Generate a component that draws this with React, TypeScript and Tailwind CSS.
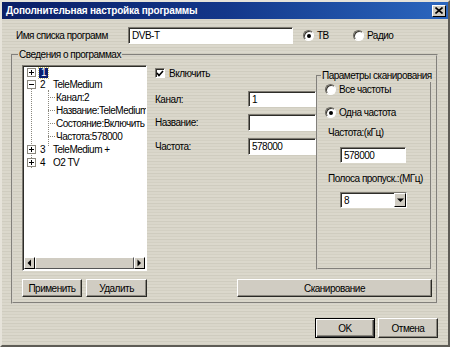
import React from "react";

const font = { fontFamily: '"Liberation Sans", Arial, sans-serif' };

const texture =
  "bg-fixed bg-[repeating-linear-gradient(0deg,#dbd8cc_0px,#dbd8cc_2px,#d3d0c3_2px,#d3d0c3_3px,#d9d6ca_3px,#d9d6ca_5px,#cfccbf_5px,#cfccbf_6px)]";

function Radio({ checked }: { checked?: boolean }) {
  return (
    <span className="relative inline-flex h-[11px] w-[11px] shrink-0 items-center justify-center rounded-full border border-t-[#6b6860] border-l-[#6b6860] border-b-[#ffffff] border-r-[#ffffff] bg-white shadow-[inset_1px_1px_0_#3a3832]">
      {checked && <span className="h-[4px] w-[4px] rounded-full bg-black" />}
    </span>
  );
}

function Btn({ children, className = "", def = false }: { children: React.ReactNode; className?: string; def?: boolean }) {
  return (
    <div
      className={
        "flex shrink-0 items-center justify-center bg-[#d0ccc2] text-black " +
        (def
          ? "border border-black shadow-[inset_1px_1px_0_#fff,inset_-1px_-1px_0_#404040,inset_-2px_-2px_0_#8a877e] "
          : "border border-t-[#ffffff] border-l-[#ffffff] border-r-[#2a2925] border-b-[#2a2925] shadow-[inset_-1px_-1px_0_#8a877e] ") +
        className
      }
    >
      {children}
    </div>
  );
}

function Input({ value, className = "" }: { value?: string; className?: string }) {
  return (
    <div
      className={
        "flex shrink-0 items-center bg-white pl-[3px] text-black border border-t-[#7d7a72] border-l-[#7d7a72] border-b-[#ffffff] border-r-[#ffffff] shadow-[inset_1px_1px_0_#2e2d29] " +
        className
      }
    >
      {value}
    </div>
  );
}

function PlusBox({ minus }: { minus?: boolean }) {
  return (
    <span className="relative flex h-[9px] w-[9px] shrink-0 items-center justify-center border border-[#8a877e] bg-white">
      <span className="absolute h-[1px] w-[5px] bg-black" />
      {!minus && <span className="absolute h-[5px] w-[1px] bg-black" />}
    </span>
  );
}

function Arrow({ dir }: { dir: "left" | "right" | "down" }) {
  const pts = dir === "left" ? "4,0.5 0.5,4 4,7.5" : dir === "right" ? "0.5,0.5 4,4 0.5,7.5" : "0,0.5 7,0.5 3.5,4";
  const w = dir === "down" ? 7 : 5;
  const h = dir === "down" ? 5 : 8;
  return (
    <svg width={w} height={h} viewBox={`0 0 ${w} ${h}`}>
      <polygon points={pts} fill="#000" />
    </svg>
  );
}

function Legend({ children, className = "" }: { children: React.ReactNode; className?: string }) {
  return (
    <span className={"absolute top-[-8px] whitespace-nowrap px-[1px] leading-[13px] " + texture + " " + className}>
      {children}
    </span>
  );
}

export default function App() {
  return (
    <div
      style={font}
      className={
        "relative flex h-[347px] w-[450px] flex-col overflow-hidden border-2 border-t-[#e6e3da] border-l-[#e6e3da] border-r-[#5e5c56] border-b-[#5e5c56] text-[10px] tracking-[-0.5px] text-black " +
        texture
      }
    >
      {/* Title bar */}
      <div className="flex h-[17px] shrink-0 items-center justify-between bg-gradient-to-r from-[#0b1f66] via-[#13378a] to-[#2c67bf] pl-[4px] pr-[2px]">
        <span className="text-[10px] font-bold tracking-[-0.2px] text-white">Дополнительная настройка программы</span>
        <div className="flex h-[12px] w-[14px] items-center justify-center border border-t-white border-l-white border-r-black border-b-black bg-[#d0ccc2]">
          <svg width="8" height="7" viewBox="0 0 8 7">
            <path d="M0.5 0.5 L7.5 6.5 M7.5 0.5 L0.5 6.5" stroke="#000" strokeWidth="1.6" />
          </svg>
        </div>
      </div>

      {/* Row 1 */}
      <div className="mt-[8px] flex h-[17px] shrink-0 items-center">
        <span className="ml-[14px] w-[112px]">Имя списка программ</span>
        <Input value="DVB-T" className="h-[17px] w-[165px]" />
        <div className="ml-[10px] flex w-[50px] items-center gap-[3px]">
          <Radio checked />
          <span>ТВ</span>
        </div>
        <div className="flex items-center gap-[3px]">
          <Radio />
          <span>Радио</span>
        </div>
      </div>

      {/* Group box */}
      <div className="relative ml-[9px] mt-[10px] h-[250px] w-[427px] shrink-0 border-2 border-[#d6d3ca] pl-[9px] pt-[9px] [border-style:groove]">
        <Legend className="left-[5px]">Сведения о программах</Legend>
        <div className="flex">
          {/* Tree */}
          <div className="flex h-[206px] w-[125px] shrink-0 flex-col border border-t-[#7d7a72] border-l-[#7d7a72] border-b-white border-r-white bg-white shadow-[inset_1px_1px_0_#2e2d29]">
            <div className="relative flex-1 overflow-hidden pl-[4px] pt-[1px]">
              {/* root dotted line */}
              <div className="absolute left-[8px] top-[22px] h-[80px] w-0 border-l border-dotted border-[#8a877e]" />
              {/* child dotted line */}
              <div className="absolute left-[25px] top-[24px] h-[56px] w-0 border-l border-dotted border-[#8a877e]" />
              <div className="relative flex h-[11px] items-center">
                <PlusBox />
                <span className="ml-[3px] flex h-[10px] items-center bg-[#0a1f70] px-[2px] text-white outline outline-1 outline-dotted outline-[#c8c070]">1</span>
              </div>
              <div className="relative flex h-[13px] items-center">
                <PlusBox minus />
                <span className="ml-[4px]">2</span>
                <span className="ml-[8px]">TeleMedium</span>
              </div>
              {["Канал:2", "Название:TeleMedium", "Состояние:Включить", "Частота:578000"].map((t) => (
                <div key={t} className="relative flex h-[13px] items-center">
                  <span className="ml-[21px] w-[7px] shrink-0 border-t border-dotted border-[#8a877e]" />
                  <span className="ml-[1px] whitespace-nowrap">{t}</span>
                </div>
              ))}
              <div className="relative flex h-[13px] items-center">
                <PlusBox />
                <span className="ml-[4px]">3</span>
                <span className="ml-[8px]">TeleMedium +</span>
              </div>
              <div className="relative flex h-[13px] items-center">
                <PlusBox />
                <span className="ml-[4px]">4</span>
                <span className="ml-[8px]">O2 TV</span>
              </div>
            </div>
            {/* scrollbar */}
            <div className="mx-[1px] mb-[1px] flex h-[12px] bg-[#e4e1d8]">
              <div className="flex w-[11px] items-center justify-center border border-t-white border-l-white border-r-black border-b-black bg-[#d0ccc2]">
                <Arrow dir="left" />
              </div>
              <div className="flex-1 border border-t-white border-l-white border-r-[#555] border-b-[#555] bg-[#d0ccc2]" />
              <div className="flex w-[11px] items-center justify-center border border-t-white border-l-white border-r-black border-b-black bg-[#d0ccc2]">
                <Arrow dir="right" />
              </div>
            </div>
          </div>

          {/* Middle column */}
          <div className="ml-[8px] flex w-[161px] shrink-0 flex-col pt-[3px]">
            <div className="flex h-[10px] items-center">
              <span className="relative flex h-[10px] w-[10px] shrink-0 items-center justify-center border border-t-[#7d7a72] border-l-[#7d7a72] border-b-white border-r-white bg-white shadow-[inset_1px_1px_0_#2e2d29]">
                <svg width="8" height="7" viewBox="0 0 8 7">
                  <path d="M1 3 L3 5.5 L7 1" stroke="#000" strokeWidth="1.6" fill="none" />
                </svg>
              </span>
              <span className="ml-[4px]">Включить</span>
            </div>
            <div className="mt-[13px] flex h-[16px] items-center">
              <span className="w-[93px]">Канал:</span>
              <Input value="1" className="h-[16px] flex-1" />
            </div>
            <div className="mt-[7px] flex h-[17px] items-center">
              <span className="w-[93px]">Название:</span>
              <Input className="h-[17px] flex-1" />
            </div>
            <div className="mt-[7px] flex h-[17px] items-center">
              <span className="w-[93px]">Частота:</span>
              <Input value="578000" className="h-[17px] flex-1" />
            </div>
          </div>

          {/* Right group */}
          <div className="relative mt-[10px] h-[195px] w-[116px] shrink-0 border-2 border-[#d6d3ca] pl-[7px] pt-[6px] [border-style:groove]">
            <Legend className="left-[3px]">Параметры сканирования</Legend>
            <div className="flex h-[13px] items-center gap-[3px]">
              <Radio />
              <span>Все частоты</span>
            </div>
            <div className="mt-[10px] flex h-[13px] items-center gap-[3px]">
              <Radio checked />
              <span>Одна частота</span>
            </div>
            <div className="ml-[3px] mt-[7px] h-[13px] leading-[13px]">Частота:(кГц)</div>
            <Input value="578000" className="ml-[15px] mt-[8px] h-[16px] w-[66px]" />
            <div className="ml-[3px] mt-[9px] h-[13px] whitespace-nowrap leading-[13px]">Полоса пропуск.:(МГц)</div>
            <div className="ml-[15px] mt-[7px] flex h-[16px] w-[67px] items-center justify-between border border-t-[#7d7a72] border-l-[#7d7a72] border-b-white border-r-white bg-white pl-[3px] shadow-[inset_1px_1px_0_#2e2d29]">
              <span>8</span>
              <div className="flex h-[14px] w-[12px] items-center justify-center border border-t-white border-l-white border-r-black border-b-black bg-[#d0ccc2]">
                <Arrow dir="down" />
              </div>
            </div>
          </div>
        </div>

        {/* Bottom buttons */}
        <div className="mt-[8px] flex items-center">
          <Btn className="h-[18px] w-[60px]">Применить</Btn>
          <Btn className="ml-[4px] h-[18px] w-[61px]">Удалить</Btn>
          <Btn className="ml-[90px] h-[18px] w-[195px]">Сканирование</Btn>
        </div>
      </div>

      {/* Footer */}
      <div className="mt-[14px] flex justify-end pr-[10px]">
        <Btn def className="h-[20px] w-[60px]">OK</Btn>
        <Btn className="ml-[3px] h-[20px] w-[60px]">Отмена</Btn>
      </div>
    </div>
  );
}
